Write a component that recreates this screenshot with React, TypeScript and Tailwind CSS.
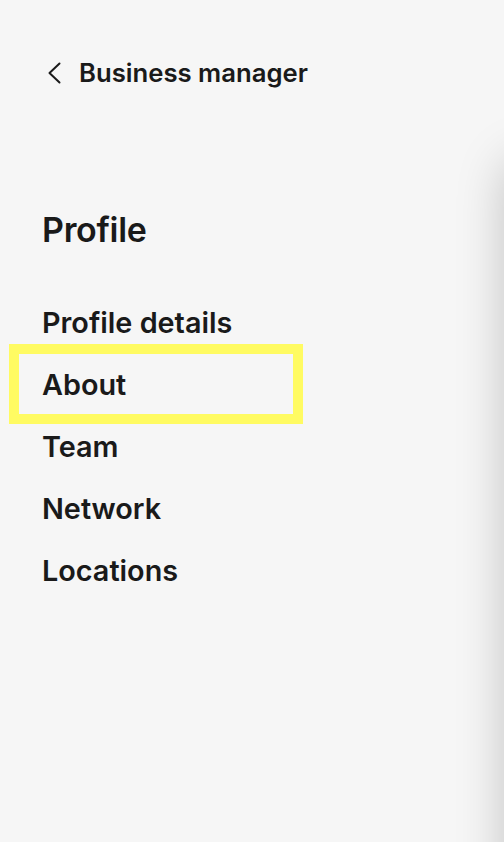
import React from "react";

const items = ["Profile details", "About", "Team", "Network", "Locations"];

const App: React.FC = () => {
  const active = "About";

  return (
    <div className="relative w-[504px] h-[842px] overflow-hidden bg-[#f6f6f6] text-[#1a1a1a] font-['Inter','Noto_Sans',sans-serif]">
      {/* Back link */}
      <div className="flex items-center gap-[16px] pt-[59px] pl-[46px]">
        <svg width="17" height="22" viewBox="0 0 17 22" fill="none">
          <path d="M13.5 1.5 L3.5 11 L13.5 20.5" stroke="#1a1a1a" strokeWidth="2" strokeLinecap="round" strokeLinejoin="round" />
        </svg>
        <span className="text-[25.7px] font-semibold leading-[28px]">Business manager</span>
      </div>

      {/* Section */}
      <h2 className="mt-[123px] pl-[42px] text-[34px] font-semibold leading-[40px] tracking-[-0.3px]">Profile</h2>

      <ul className="mt-[42px] flex flex-col">
        {items.map((item) => (
          <li key={item} className="relative pl-[42px] h-[62px] flex items-center">
            {item === active && (
              <div className="absolute left-[9px] top-[-10px] w-[294px] h-[80px] border-[10px] border-[#fffb62]" />
            )}
            <span className="relative text-[28.8px] font-semibold leading-[34px]">{item}</span>
          </li>
        ))}
      </ul>

      {/* Sheet peeking in from the right */}
      <div className="absolute left-[506px] top-[160px] w-[300px] h-[800px] rounded-[20px] bg-white shadow-[0_0_50px_rgba(0,0,0,0.22)]" />
    </div>
  );
};

export default App;
